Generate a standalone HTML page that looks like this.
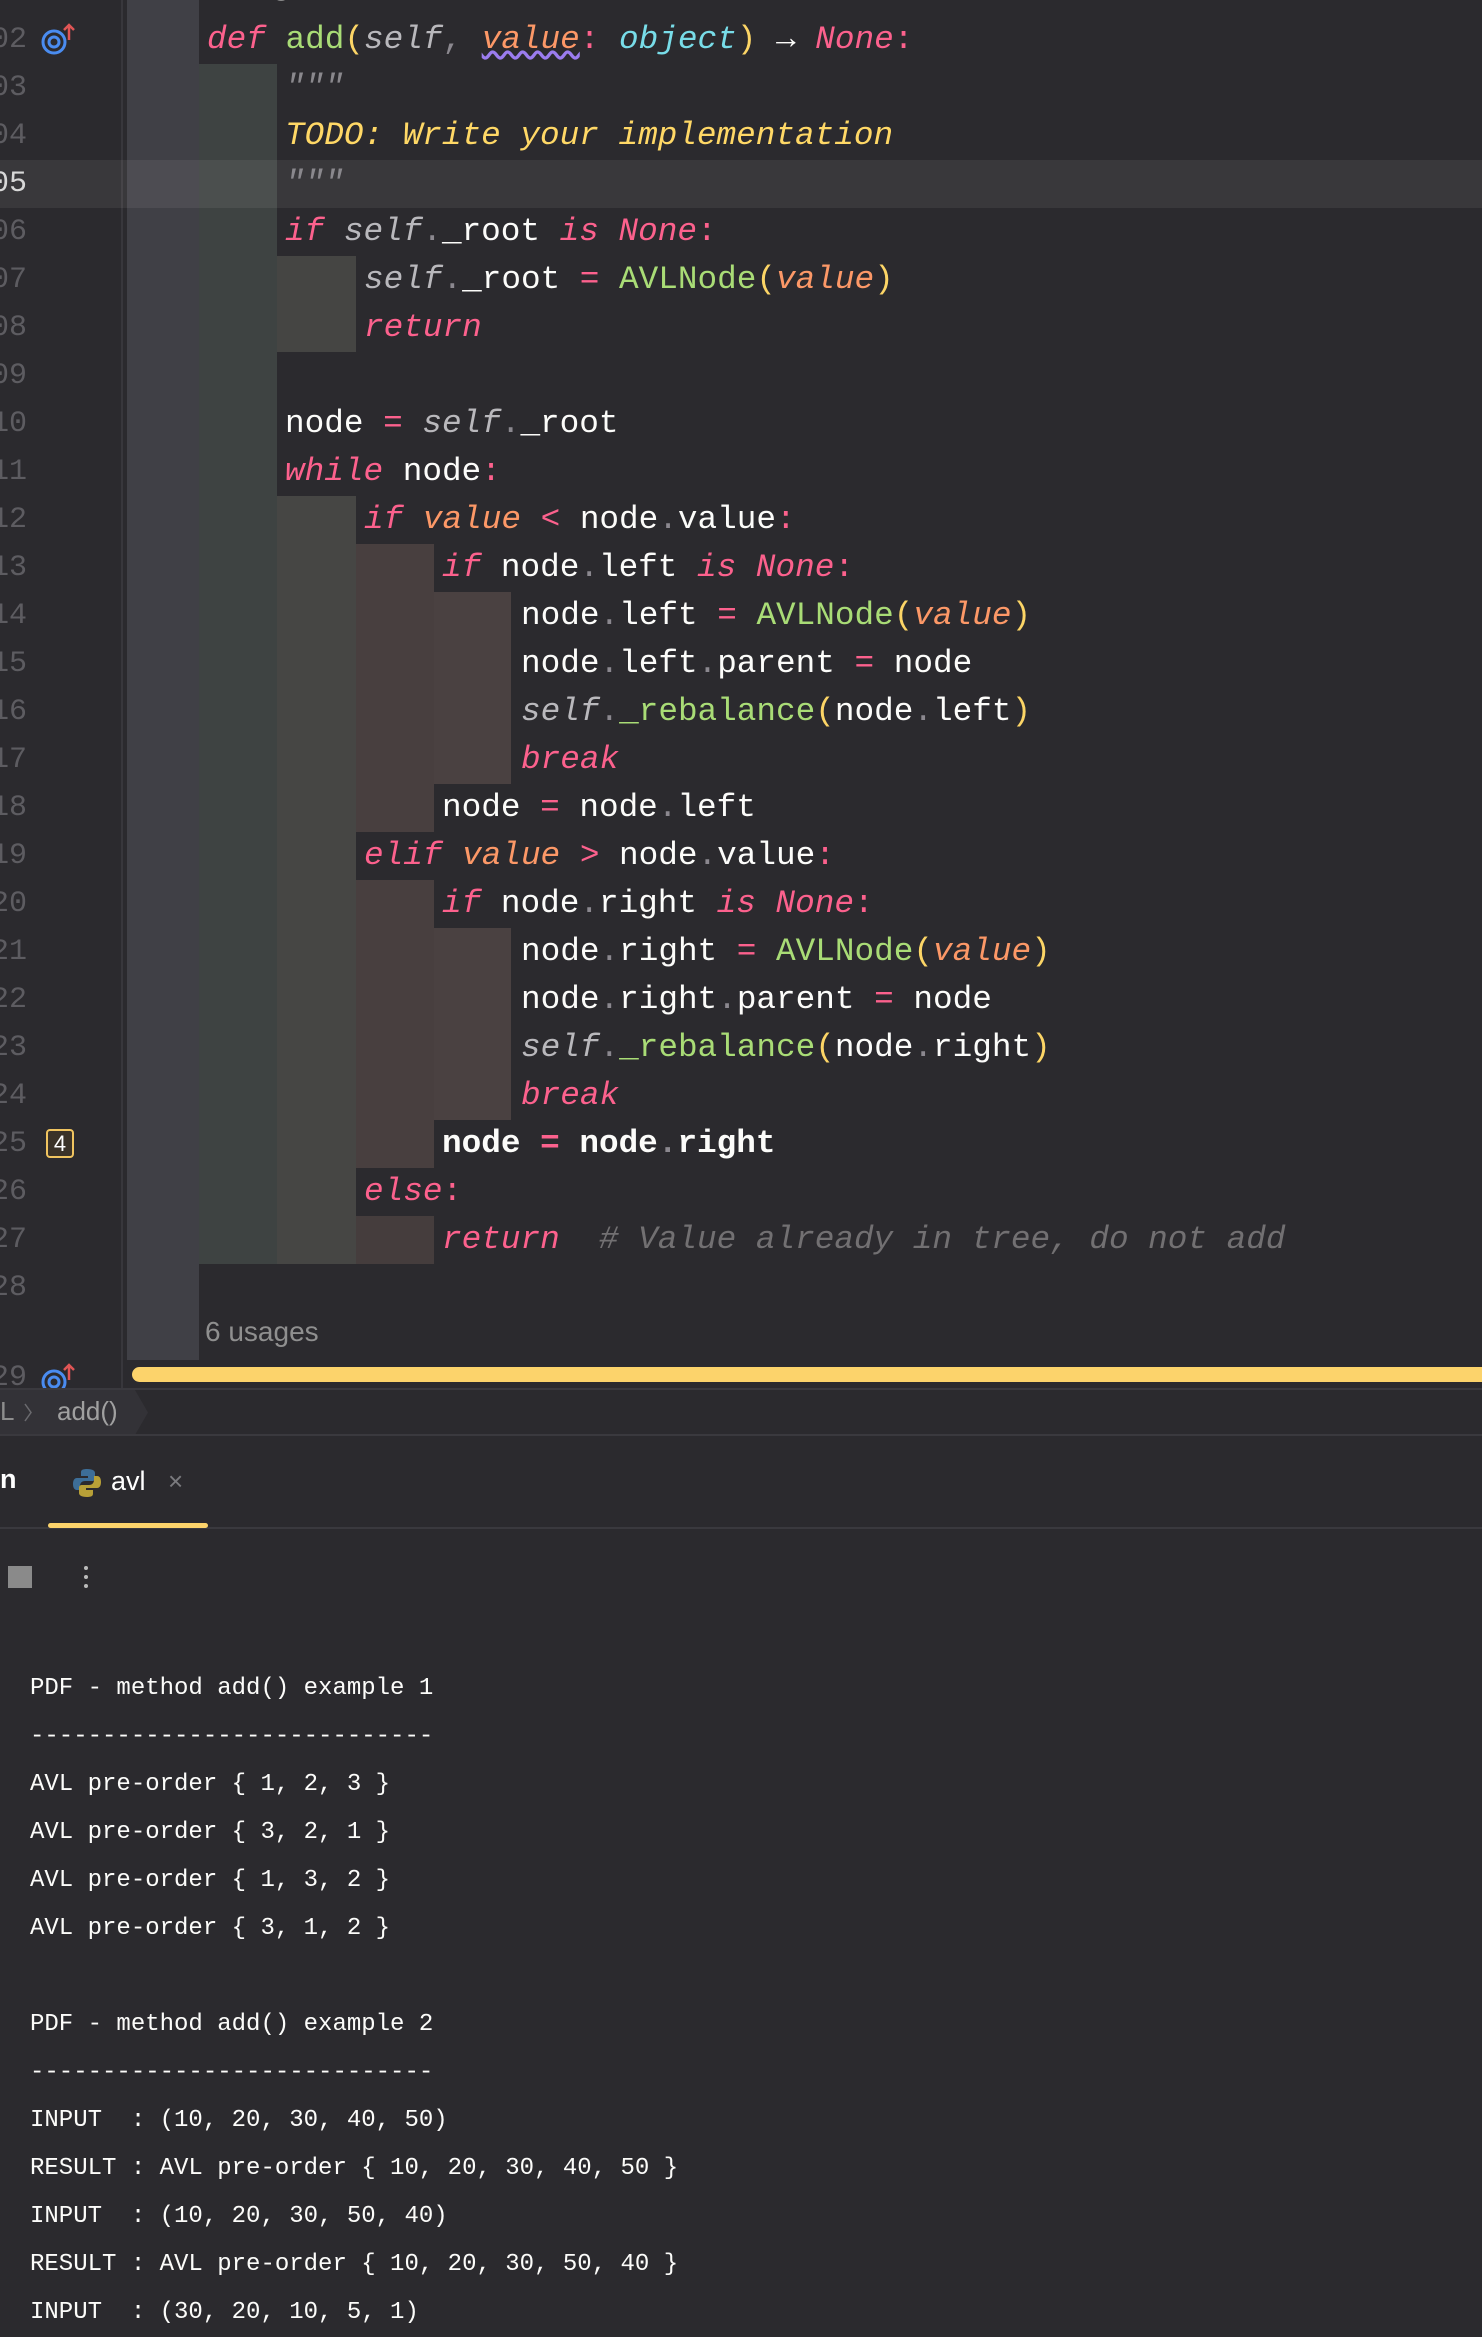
<!DOCTYPE html>
<html><head><meta charset="utf-8">
<style>
*{margin:0;padding:0;box-sizing:border-box}
body{width:1482px;height:2324px;background:#2b2a2e;position:relative;overflow:hidden;font-family:"Liberation Mono",monospace}
.a{position:absolute}
.ln{position:absolute;right:1455px;width:80px;text-align:right;font-size:30px;color:#5d5c61;line-height:48px;font-family:"Liberation Mono",monospace}
.c{position:absolute;font-size:32.7px;line-height:48px;white-space:pre;color:#fcfcfa;font-family:"Liberation Mono",monospace}
.k{color:#fc618d;font-style:italic}
.f{color:#a9dc76}
.p{color:#fcd566}
.s{color:#b9b8bc;font-style:italic}
.v{color:#fc9867;font-style:italic}
.t{color:#78dce8;font-style:italic}
.d{color:#ffd866;font-style:italic}
.q{color:#8a888d;font-style:italic}
.o{color:#fc618d}
.g{color:#8b888f}
.cm{color:#727072;font-style:italic}
.con{position:absolute;left:30px;font-size:24px;line-height:48px;color:#fcfcfa;white-space:pre;font-family:"Liberation Mono",monospace}
</style></head><body>
<div class="a" style="left:121px;top:0;width:2px;height:1389px;background:#38373c"></div>
<div class="a" style="left:127px;top:0;width:72px;height:1360px;background:#404046"></div>
<div class="a" style="left:199px;top:64px;width:78px;height:1200px;background:#3e4342"></div>
<div class="a" style="left:277px;top:256px;width:79px;height:96px;background:#454543"></div>
<div class="a" style="left:277px;top:496px;width:79px;height:768px;background:#464644"></div>
<div class="a" style="left:356px;top:544px;width:78px;height:288px;background:#483f3f"></div>
<div class="a" style="left:356px;top:880px;width:78px;height:288px;background:#483f3f"></div>
<div class="a" style="left:356px;top:1216px;width:78px;height:48px;background:#453d3d"></div>
<div class="a" style="left:434px;top:592px;width:77px;height:192px;background:#4a4141"></div>
<div class="a" style="left:434px;top:928px;width:77px;height:192px;background:#4a4141"></div>
<div class="a" style="left:0;top:160px;width:1482px;height:48px;background:rgba(255,240,245,0.07)"></div>

<div class="a" style="left:205px;top:-30px;font-family:'Liberation Sans',sans-serif;font-size:28px;color:#8a8a8a">1 usage</div>

<div class="ln" style="top:16px">102</div>
<div class="ln" style="top:64px">103</div>
<div class="ln" style="top:112px">104</div>
<div class="ln" style="top:160px;color:#d8d8d8">105</div>
<div class="ln" style="top:208px">106</div>
<div class="ln" style="top:256px">107</div>
<div class="ln" style="top:304px">108</div>
<div class="ln" style="top:352px">109</div>
<div class="ln" style="top:400px">110</div>
<div class="ln" style="top:448px">111</div>
<div class="ln" style="top:496px">112</div>
<div class="ln" style="top:544px">113</div>
<div class="ln" style="top:592px">114</div>
<div class="ln" style="top:640px">115</div>
<div class="ln" style="top:688px">116</div>
<div class="ln" style="top:736px">117</div>
<div class="ln" style="top:784px">118</div>
<div class="ln" style="top:832px">119</div>
<div class="ln" style="top:880px">120</div>
<div class="ln" style="top:928px">121</div>
<div class="ln" style="top:976px">122</div>
<div class="ln" style="top:1024px">123</div>
<div class="ln" style="top:1072px">124</div>
<div class="ln" style="top:1120px">125</div>
<div class="ln" style="top:1168px">126</div>
<div class="ln" style="top:1216px">127</div>
<div class="ln" style="top:1264px">128</div>
<div class="ln" style="top:1354px">129</div>

<svg class="a" style="left:40px;top:22px" width="40" height="36" viewBox="0 0 40 36"><circle cx="14" cy="20" r="11" fill="none" stroke="#4a8cf0" stroke-width="3"/><circle cx="14" cy="20" r="5" fill="none" stroke="#4a8cf0" stroke-width="3"/><path d="M29 18V3M24 8l5-5 5 5" fill="none" stroke="#e05555" stroke-width="2.5"/></svg>
<svg class="a" style="left:40px;top:1362px" width="40" height="27" viewBox="0 0 40 27"><circle cx="14" cy="20" r="11" fill="none" stroke="#4a8cf0" stroke-width="3"/><circle cx="14" cy="20" r="5" fill="none" stroke="#4a8cf0" stroke-width="3"/><path d="M29 18V3M24 8l5-5 5 5" fill="none" stroke="#e05555" stroke-width="2.5"/></svg>
<div class="a" style="left:46px;top:1129px;width:28px;height:29px;border:2px solid #f0c460;border-radius:4px;background:#3a3228;color:#fff;font-size:22px;text-align:center;line-height:25px;font-family:'Liberation Sans',sans-serif">4</div>

<div class="c" style="left:207px;top:16px"><span class="k">def</span> <span class="f">add</span><span class="p">(</span><span class="s">self</span><span class="g">,</span> <span class="v" style="text-decoration:underline wavy #9b7cf0">value</span><span class="o">:</span> <span class="t">object</span><span class="p">)</span> → <span class="k">None</span><span class="o">:</span></div>
<div class="c q" style="left:285px;top:64px">"""</div>
<div class="c d" style="left:285px;top:112px">TODO: Write your implementation</div>
<div class="c q" style="left:285px;top:160px">"""</div>
<div class="c" style="left:285px;top:208px"><span class="k">if</span> <span class="s">self</span><span class="g">.</span>_root <span class="k">is</span> <span class="k">None</span><span class="o">:</span></div>
<div class="c" style="left:364px;top:256px"><span class="s">self</span><span class="g">.</span>_root <span class="o">=</span> <span class="f">AVLNode</span><span class="p">(</span><span class="v">value</span><span class="p">)</span></div>
<div class="c k" style="left:364px;top:304px">return</div>
<div class="c" style="left:285px;top:400px">node <span class="o">=</span> <span class="s">self</span><span class="g">.</span>_root</div>
<div class="c" style="left:285px;top:448px"><span class="k">while</span> node<span class="o">:</span></div>
<div class="c" style="left:364px;top:496px"><span class="k">if</span> <span class="v">value</span> <span class="o">&lt;</span> node<span class="g">.</span>value<span class="o">:</span></div>
<div class="c" style="left:442px;top:544px"><span class="k">if</span> node<span class="g">.</span>left <span class="k">is</span> <span class="k">None</span><span class="o">:</span></div>
<div class="c" style="left:521px;top:592px">node<span class="g">.</span>left <span class="o">=</span> <span class="f">AVLNode</span><span class="p">(</span><span class="v">value</span><span class="p">)</span></div>
<div class="c" style="left:521px;top:640px">node<span class="g">.</span>left<span class="g">.</span>parent <span class="o">=</span> node</div>
<div class="c" style="left:521px;top:688px"><span class="s">self</span><span class="g">.</span><span class="f">_rebalance</span><span class="p">(</span>node<span class="g">.</span>left<span class="p">)</span></div>
<div class="c k" style="left:521px;top:736px">break</div>
<div class="c" style="left:442px;top:784px">node <span class="o">=</span> node<span class="g">.</span>left</div>
<div class="c" style="left:364px;top:832px"><span class="k">elif</span> <span class="v">value</span> <span class="o">&gt;</span> node<span class="g">.</span>value<span class="o">:</span></div>
<div class="c" style="left:442px;top:880px"><span class="k">if</span> node<span class="g">.</span>right <span class="k">is</span> <span class="k">None</span><span class="o">:</span></div>
<div class="c" style="left:521px;top:928px">node<span class="g">.</span>right <span class="o">=</span> <span class="f">AVLNode</span><span class="p">(</span><span class="v">value</span><span class="p">)</span></div>
<div class="c" style="left:521px;top:976px">node<span class="g">.</span>right<span class="g">.</span>parent <span class="o">=</span> node</div>
<div class="c" style="left:521px;top:1024px"><span class="s">self</span><span class="g">.</span><span class="f">_rebalance</span><span class="p">(</span>node<span class="g">.</span>right<span class="p">)</span></div>
<div class="c k" style="left:521px;top:1072px">break</div>
<div class="c" style="left:442px;top:1120px;font-weight:bold">node <span class="o">=</span> node<span class="g">.</span>right</div>
<div class="c" style="left:364px;top:1168px"><span class="k">else</span><span class="o">:</span></div>
<div class="c" style="left:442px;top:1216px"><span class="k">return</span>  <span class="cm"># Value already in tree, do not add</span></div>

<div class="a" style="left:205px;top:1316px;font-family:'Liberation Sans',sans-serif;font-size:28px;color:#8f8f8f">6 usages</div>
<div class="a" style="left:132px;top:1367px;width:1360px;height:15px;background:#fcd36b;border-radius:8px"></div>

<div class="a" style="left:0;top:1388px;width:1482px;height:2px;background:#3a393e"></div>
<svg class="a" style="left:0;top:1390px" width="160" height="45"><path d="M0 0H135L148 22.5 135 45H0Z" fill="#333237"/><path d="M25 14l6 8.5-6 8.5" fill="none" stroke="#6a6a6e" stroke-width="1.5"/></svg>
<div class="a" style="left:0;top:1396px;font-family:'Liberation Sans',sans-serif;font-size:26px;color:#8d8d8d">L</div>
<div class="a" style="left:57px;top:1396px;font-family:'Liberation Sans',sans-serif;font-size:26px;color:#a0a0a0">add()</div>
<div class="a" style="left:0;top:1434px;width:1482px;height:2px;background:#3a393e"></div>

<div class="a" style="left:0;top:1464px;font-family:'Liberation Sans',sans-serif;font-size:27px;color:#fff;font-weight:bold">n</div>
<svg class="a" style="left:73px;top:1468px" width="28" height="30" viewBox="0 0 28 30"><path d="M14 1C8 1 8 3 8 5v3h7v2H4C1 10 0 13 0 16s1 6 4 6h3v-4c0-3 2-5 5-5h7c2 0 3-1 3-3V5c0-2-2-4-8-4z" fill="#3d6e98"/><path d="M14 29c6 0 6-2 6-4v-3h-7v-2h11c3 0 4-3 4-6s-1-6-4-6h-3v4c0 3-2 5-5 5H9c-2 0-3 1-3 3v5c0 2 2 4 8 4z" fill="#b8a037"/></svg>
<div class="a" style="left:111px;top:1466px;font-family:'Liberation Sans',sans-serif;font-size:27px;color:#fff">avl</div>
<div class="a" style="left:168px;top:1466px;font-family:'Liberation Sans',sans-serif;font-size:26px;color:#7a7a7e">×</div>
<div class="a" style="left:0;top:1527px;width:1482px;height:2px;background:#3a393e"></div>
<div class="a" style="left:48px;top:1523px;width:160px;height:5px;background:#fcd36b;border-radius:3px"></div>

<div class="a" style="left:8px;top:1566px;width:24px;height:22px;background:#8a8a8a"></div>
<div class="a" style="left:84px;top:1566px;width:4px;height:4px;border-radius:2px;background:#bbb"></div>
<div class="a" style="left:84px;top:1575px;width:4px;height:4px;border-radius:2px;background:#bbb"></div>
<div class="a" style="left:84px;top:1584px;width:4px;height:4px;border-radius:2px;background:#bbb"></div>

<div class="con" style="top:1665px">PDF - method add() example 1</div>
<div class="con" style="top:1713px">----------------------------</div>
<div class="con" style="top:1761px">AVL pre-order { 1, 2, 3 }</div>
<div class="con" style="top:1809px">AVL pre-order { 3, 2, 1 }</div>
<div class="con" style="top:1857px">AVL pre-order { 1, 3, 2 }</div>
<div class="con" style="top:1905px">AVL pre-order { 3, 1, 2 }</div>
<div class="con" style="top:2001px">PDF - method add() example 2</div>
<div class="con" style="top:2049px">----------------------------</div>
<div class="con" style="top:2097px">INPUT  : (10, 20, 30, 40, 50)</div>
<div class="con" style="top:2145px">RESULT : AVL pre-order { 10, 20, 30, 40, 50 }</div>
<div class="con" style="top:2193px">INPUT  : (10, 20, 30, 50, 40)</div>
<div class="con" style="top:2241px">RESULT : AVL pre-order { 10, 20, 30, 50, 40 }</div>
<div class="con" style="top:2289px">INPUT  : (30, 20, 10, 5, 1)</div>
</body></html>
